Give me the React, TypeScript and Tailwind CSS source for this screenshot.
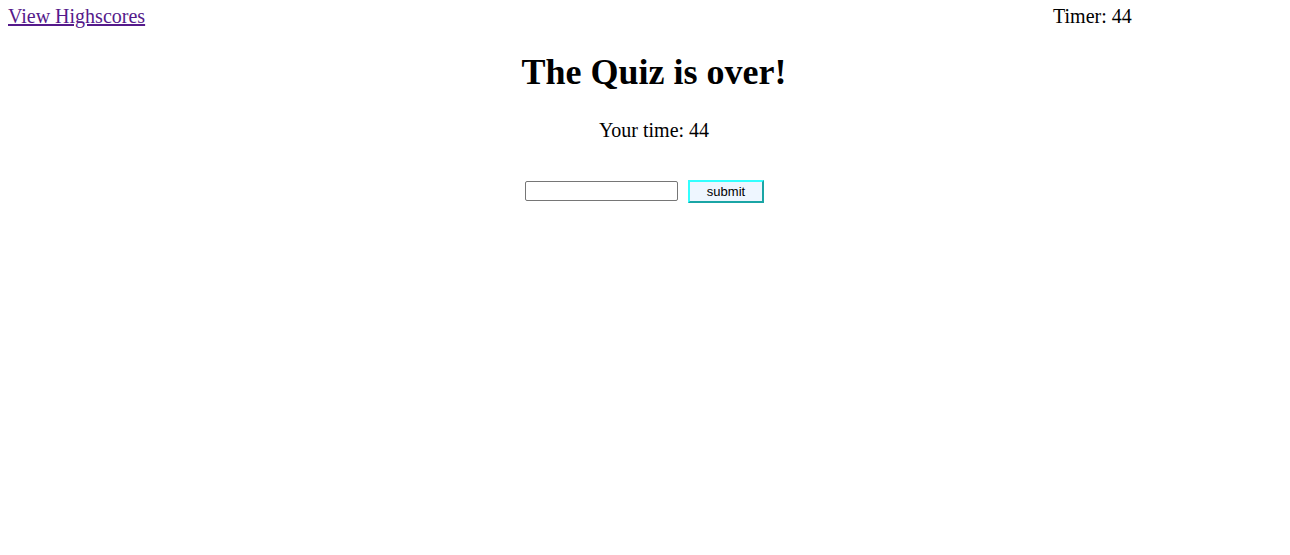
const App = () => {
    return (
        <div className="min-h-[555px] bg-white text-black font-['Liberation_Serif',serif]">
            {/* Header */}
            <div className="flex justify-between pl-2 pt-[5px] text-[20px] leading-[23px]">
                <a href="#" className="text-[#551a8b] underline">View Highscores</a>
                <span className="w-[237px]">Timer: 44</span>
            </div>

            {/* Result */}
            <div className="flex flex-col items-center pl-[18px]">
                <h1 className="mt-[24px] text-[36px] leading-[41px] font-bold">The Quiz is over!</h1>
                <p className="mt-[26px] text-[20px] leading-[23px]">Your time: 44</p>
            </div>

            <form className="mt-[38px] flex justify-center items-start gap-[10px] pr-[1px]" onSubmit={(e) => e.preventDefault()}>
                <input
                    type="text"
                    className="mt-[1px] w-[153px] h-[20px] border border-[#767676] rounded-[2px] px-1 text-[13px] font-['Liberation_Sans',sans-serif]"
                />
                <button
                    type="submit"
                    className="w-[76px] h-[23px] border-2 border-t-[#33ffff] border-l-[#33ffff] border-r-[#1aa5a5] border-b-[#1aa5a5] bg-[#eef6ff] text-[13px] leading-none font-['Liberation_Sans',sans-serif]"
                >
                    submit
                </button>
            </form>
        </div>
    )
}
export default App
